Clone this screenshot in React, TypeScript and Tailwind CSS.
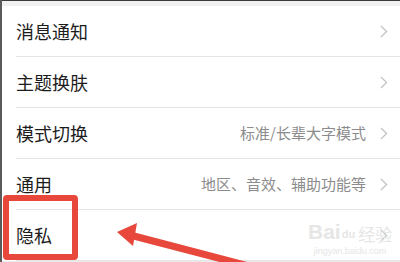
const rows = [
  { title: "消息通知", value: "" },
  { title: "主题换肤", value: "" },
  { title: "模式切换", value: "标准/长辈大字模式" },
  { title: "通用", value: "地区、音效、辅助功能等" },
  { title: "隐私", value: "" },
];

const Chevron = () => (
  <svg width="8" height="13" viewBox="0 0 8 13" className="shrink-0">
    <path d="M1 1 L6.5 6.5 L1 12" fill="none" stroke="#c4c4c4" strokeWidth="1.4" />
  </svg>
);

export default function App() {
  return (
    <div
      className="relative w-[400px] h-[262px] overflow-hidden bg-[#ebebeb] border-l-2 border-[#5a5a5a]"
      style={{ fontFamily: '"Noto Sans CJK SC", "Noto Sans", sans-serif' }}
    >
      <div className="h-[1px] bg-[#3c3c3c]" />
      <div className="h-[5px] bg-[#f0f0f0]" />

      {/* Settings list */}
      <div className="bg-white">
        {rows.map((row) => (
          <div key={row.title} className="pl-[14px]">
            <div className="flex items-center h-[50px] pr-[12px]">
              <span className="text-[18px] text-[#1c1c1c] flex-1">{row.title}</span>
              {row.value && (
                <span className="text-[15px] text-[#8c8c8c] mr-[14px]">{row.value}</span>
              )}
              <Chevron />
            </div>
            <div className="h-[1px] bg-[#e4e4e4]" />
          </div>
        ))}
      </div>

      {/* Watermark */}
      <div className="absolute left-[306px] top-[221px] flex flex-col items-center text-[#e6e6e6] pointer-events-none">
        <div className="flex items-end leading-none">
          <span className="text-[21px] font-bold" style={{ fontFamily: '"Liberation Sans", sans-serif' }}>Bai</span>
          <span className="text-[11px] font-bold ml-[1px] mb-[2px]" style={{ fontFamily: '"Liberation Sans", sans-serif' }}>du</span>
          <span className="text-[17px] ml-[3px]">经验</span>
        </div>
        <span className="text-[9px] mt-[3px]" style={{ fontFamily: '"Liberation Sans", sans-serif' }}>jingyan.baidu.com</span>
      </div>

      {/* Highlight box */}
      <div className="absolute left-[1px] top-[195px] w-[75px] h-[65px] border-[6px] border-[#e8473b] rounded-[4px]" />

      {/* Arrow */}
      <svg className="absolute left-0 top-0" width="400" height="262" viewBox="0 0 400 262">
        <line x1="128" y1="235" x2="262" y2="270" stroke="#e8473b" strokeWidth="7" />
        <polygon points="115,232 135,223 131,246" fill="#e8473b" />
      </svg>
    </div>
  );
}
